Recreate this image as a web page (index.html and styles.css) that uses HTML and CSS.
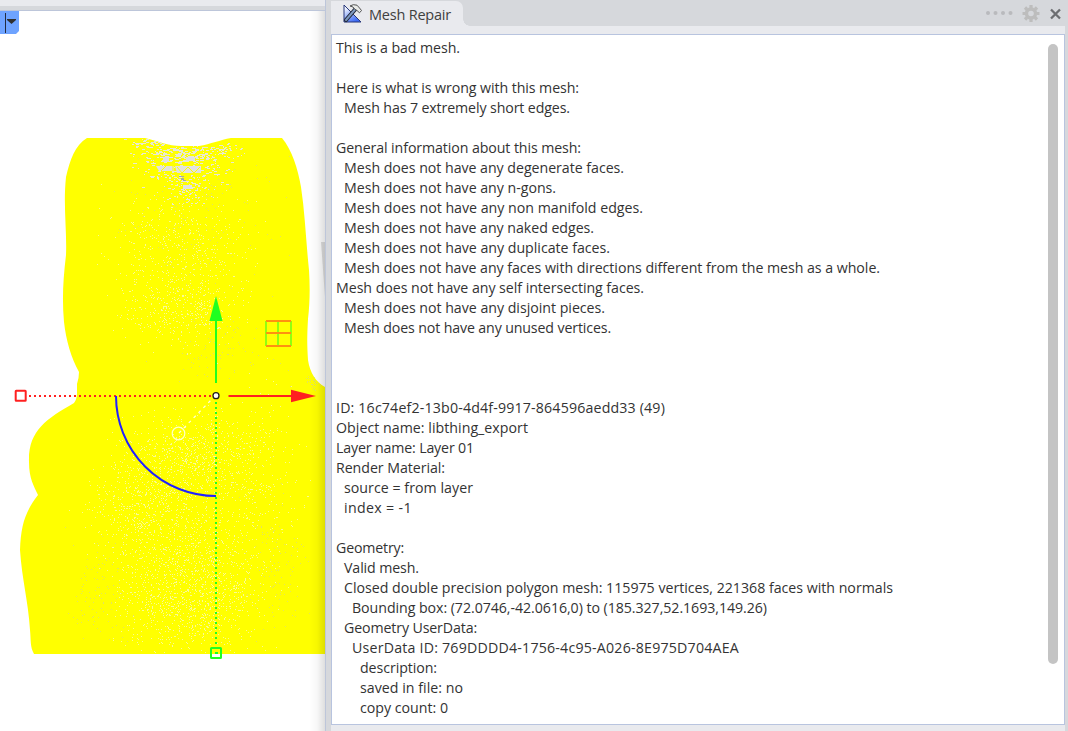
FILE: index.html
```
<!DOCTYPE html>
<html lang="en">
<head>
<meta charset="utf-8">
<title>Mesh Repair</title>
<link rel="stylesheet" href="styles.css">
</head>
<body>
<div class="app">
  <section class="viewport">
    <div class="ribbon"></div>
    <svg class="scene" width="325" height="720" viewBox="0 11 325 720">
      <defs>
        <clipPath id="body"><path id="outline" d="M87 138H145C158 141 168 146 181 146H199C211 144 220 140 231 138H282C292 150 298 169 301 187C305 213 306 242 309 270C310 286 310 302 308 319C307 336 307 345 308 360C310 373 316 382 325 387V654H34C30 647 31 640 30 630C28 600 22 580 20 550C21 525 25 512 38 495C34 486 29 479 29 462C28 431 46 419 74 403Q77 399 77 393V384Q79 378 79 372C71 358 66 340 64 322C62 300 63 280 66 255C67 230 63 205 66 177C70 160 75 145 87 138Z"/></clipPath>
        <linearGradient id="shade"><stop offset="0" stop-opacity="0"/><stop offset=".5" stop-opacity=".03"/><stop offset="1" stop-opacity=".13"/></linearGradient>
      </defs>
      <path d="M321 242h4v55z" fill="#dedede"/>
      <g clip-path="url(#body)">
        <rect y="130" width="325" height="530" fill="#ff0"/>
        <path id="speckles" stroke="#fafa96" shape-rendering="crispEdges"/>
        <path id="wear" stroke="#e9e9d4" shape-rendering="crispEdges"/>
        <path id="dust" stroke="#e2e260" shape-rendering="crispEdges"/>
        <path d="M156 166h18v5h-15zM175 166h26v7h-24zM163 157h6v5h-6zM186 157h9v4h-9zM183 185h9v4h-9z" fill="#e2e2df"/>
        <path d="M156 164.500h45M156 173.500h45M177 167l5 6 6-6 6 6 6-6M173 171v-5M161 171l5-5" stroke="#ff0" fill="none"/>
        <path d="M179 176h5v1h-5zM181 178h3v2h-3zM183 180h3v1h-3z" fill="#a9aaa0"/>
      </g>
      <g fill="none" stroke-width="2">
        <path d="M29 396H212" stroke="#ff2020" stroke-dasharray="2 3"/>
        <path d="M216 402V648" stroke="#20ff20" stroke-dasharray="2 3"/>
        <path d="M216 383V320" stroke="#20ff20"/>
        <path d="M228.500 396H292" stroke="#ff2020"/>
        <path d="M116 396A100 100 0 0 0 216 496" stroke="#2020ff"/>
        <rect x="15.700" y="390.700" width="10" height="10" rx=".5" fill="#fff" stroke="#ff2020"/>
        <rect x="211" y="648" width="10" height="10" rx=".5" stroke="#20ff20"/>
        <path d="M215 653h3" stroke="#20ff20"/>
        <path d="M266 321V346M278 321V346M291 321V346" stroke="#90ff10"/>
        <path d="M266 321H291M266 333H291M266 346H291" stroke="#ff9010"/>
        <circle cx="178.500" cy="433.500" r="6.300" stroke="#ffffc8" stroke-width="1.200"/>
        <path d="M179 433L212 399" stroke="#ffffe0" stroke-dasharray="3 4" stroke-width="1.200"/>
        <circle cx="216" cy="395.700" r="3" fill="#fff" stroke="#202020" stroke-width="1.300"/>
      </g>
      <path d="M216 296l6.500 25h-13z" fill="#20ff20"/>
      <path d="M316 396l-25 6.200v-12.400z" fill="#ff2020"/>
      <rect x="309" y="11" width="16" height="720" fill="url(#shade)"/>
    </svg>
    <svg class="view-menu" width="19" height="23" viewBox="0 0 19 23"><path d="M0 0H19V20L16 23H0Z" fill="#6ea3ff"/><path d="M5.500 2V22" stroke="#222b40"/><path d="M7 8H16V9L11.500 13 7 9Z" fill="#303030"/></svg>
  </section>
  <section class="panel">
    <header class="bar">
      <div class="tab">
        <svg width="20" height="20" viewBox="0 0 20 20">
          <defs><linearGradient id="blue" x1="0" y1="0" x2=".6" y2="1"><stop offset=".2" stop-color="#eef3ff"/><stop offset="1" stop-color="#3c6af5"/></linearGradient></defs>
          <path d="M2 2V19H19Z" fill="url(#blue)" stroke="#27377a"/>
          <path d="M4 17L13.500 6" stroke="#252b3a" stroke-width="4.200" stroke-linecap="round"/>
          <path d="M4 17L13 6.500" stroke="#7d98c0" stroke-width="2" stroke-linecap="round"/>
          <path d="M8 3Q11 .8 15 2.200L17.500 5 19.500 7.500 17.500 9.800 15 7.500 12.500 6 11 4Z" fill="#e8eae8" stroke="#444" stroke-width=".9"/>
        </svg>
        <span class="title" data-width="82">Mesh Repair</span>
      </div>
      <svg class="tools" width="84" height="26" viewBox="984 0 84 26">
        <g fill="#b9babd"><circle cx="988" cy="13" r="2"/><circle cx="995.500" cy="13" r="2"/><circle cx="1003" cy="13" r="2"/><circle cx="1010.500" cy="13" r="2"/></g>
        <circle cx="1031" cy="13.500" r="4.500" fill="none" stroke="#bdbdbd" stroke-width="3.400"/>
        <path d="M1031 5v3M1031 19v3M1022.500 13.500h3M1036.500 13.500h3M1025 7.500l2 2M1035 17.500l2 2M1025 19.500l2-2M1035 9.500l2-2" stroke="#bdbdbd" stroke-width="3.200"/>
        <path d="M1051 9.500L1060 18.500M1060 9.500L1051 18.500" stroke="#6c6e71" stroke-width="2.300"/>
      </svg>
    </header>
    <div class="frame">
      <div class="report">
        <div class="line"><span data-width="124">This is a bad mesh.</span></div>
        <div class="line"></div>
        <div class="line"><span data-width="243">Here is what is wrong with this mesh:</span></div>
        <div class="line in1"><span data-width="226">Mesh has 7 extremely short edges.</span></div>
        <div class="line"></div>
        <div class="line"><span data-width="245">General information about this mesh:</span></div>
        <div class="line in1"><span data-width="280">Mesh does not have any degenerate faces.</span></div>
        <div class="line in1"><span data-width="212">Mesh does not have any n-gons.</span></div>
        <div class="line in1"><span data-width="299">Mesh does not have any non manifold edges.</span></div>
        <div class="line in1"><span data-width="250">Mesh does not have any naked edges.</span></div>
        <div class="line in1"><span data-width="266">Mesh does not have any duplicate faces.</span></div>
        <div class="line in1"><span data-width="536">Mesh does not have any faces with directions different from the mesh as a whole.</span></div>
        <div class="line"><span data-width="308">Mesh does not have any self intersecting faces.</span></div>
        <div class="line in1"><span data-width="261">Mesh does not have any disjoint pieces.</span></div>
        <div class="line in1"><span data-width="267">Mesh does not have any unused vertices.</span></div>
        <div class="line"></div>
        <div class="line"></div>
        <div class="line"></div>
        <div class="line"><span data-width="329">ID: 16c74ef2-13b0-4d4f-9917-864596aedd33 (49)</span></div>
        <div class="line"><span data-width="192">Object name: libthing_export</span></div>
        <div class="line"><span data-width="138">Layer name: Layer 01</span></div>
        <div class="line"><span data-width="109">Render Material:</span></div>
        <div class="line in1"><span data-width="129">source = from layer</span></div>
        <div class="line in1"><span data-width="68">index = -1</span></div>
        <div class="line"></div>
        <div class="line"><span data-width="68">Geometry:</span></div>
        <div class="line in1"><span data-width="75">Valid mesh.</span></div>
        <div class="line in1"><span data-width="549">Closed double precision polygon mesh: 115975 vertices, 221368 faces with normals</span></div>
        <div class="line in2"><span data-width="415">Bounding box: (72.0746,-42.0616,0) to (185.327,52.1693,149.26)</span></div>
        <div class="line in1"><span data-width="133">Geometry UserData:</span></div>
        <div class="line in2"><span data-width="387">UserData ID: 769DDDD4-1756-4c95-A026-8E975D704AEA</span></div>
        <div class="line in3"><span data-width="77">description:</span></div>
        <div class="line in3"><span data-width="103">saved in file: no</span></div>
        <div class="line in3"><span data-width="88">copy count: 0</span></div>
      </div>
      <div class="thumb"></div>
    </div>
  </section>
</div>
<script src="app.js"></script>
</body>
</html>
```
FILE: styles.css
```
* { box-sizing: border-box; }
body { margin: 0; font-family: "Open Sans", "Noto Sans", sans-serif; color: #333; }
.app { display: flex; width: 1068px; height: 731px; overflow: hidden; background: #fff; }
.viewport { position: relative; width: 325px; flex: none; }
.ribbon { height: 11px; background: linear-gradient(#e9eaee 6px, #d6d8dc 6px); border-bottom: 1px solid #bdc6da; }
.scene { display: block; }
.view-menu { position: absolute; left: 0; top: 11px; }
.panel { display: flex; flex-direction: column; flex: 1; background: #d6d8dc; border-left: 1px solid #bdc6da; padding: 0 3px 0 5px; }
.bar { display: flex; justify-content: space-between; height: 26px; flex: none; margin-right: -3px; background: radial-gradient(circle at 139px 19px, #d6d8dc 7px, #e9eaee 7.5px) 132px 19px / 7px 7px no-repeat; background: radial-gradient(circle at 100% 0, #d6d8dc 6.5px, #e9eaee 7px) 132px 19px / 7px 7px no-repeat; }
.tab { display: flex; width: 132px; height: 25px; margin-top: 1px; padding: 2px 0 0 11px; gap: 7px; background: #e9eaee; border-radius: 0 7px 0 0; }
.title { font-size: 14.5px; line-height: 24px; height: 23px; margin-top: 0; white-space: pre; color: #404040; }
.frame { display: flex; flex: 1; min-height: 0; padding: 8px 0 6px; background: #e9eaee; position: relative; }
.report { flex: 1; border: 1px solid #b8c4df; background: #fff; padding: 3px 0 0 4px; }
.line { height: 20px; line-height: 20px; font-size: 14.2px; white-space: pre; }
.in1 { padding-left: 8px; }
.in2 { padding-left: 16px; }
.in3 { padding-left: 24px; }
.thumb { position: absolute; right: 7px; top: 18px; width: 10px; height: 620px; border-radius: 5px; background: #c4c4c4; }
```
FILE: app.js
```
document.querySelectorAll("[data-width]").forEach(el => {
  const gap = (Number(el.dataset.width) - el.getBoundingClientRect().width) / el.textContent.length;
  el.style.letterSpacing = gap + "px";
});

let seed = 7;
const rnd = () => (seed = (seed * 16807) % 2147483647) / 2147483647;
const bell = () => (rnd() + rnd() + rnd() - 1.5) / 1.5;
function scatter(id, clouds) {
  let d = "";
  clouds.forEach(([cx, cy, rx, ry, n, len]) => {
    for (let i = 0; i < n; i++) {
      const x = Math.round(cx + bell() * rx), y = Math.round(cy + bell() * ry) + 0.5;
      d += `M${x} ${y}h${1 + Math.floor(rnd() * len)}`;
    }
  });
  document.getElementById(id).setAttribute("d", d);
}
scatter("speckles", [[180,245,95,70,480,1],[180,310,85,55,420,1],[190,455,100,60,650,1],[150,510,90,70,600,1],[190,590,100,100,1300,1],[250,500,75,150,350,1]]);
scatter("wear", [[181,153,60,14,190,4],[185,170,58,26,200,3],[187,190,40,24,100,2],[150,143,35,6,40,3],[222,150,30,12,50,2]]);
scatter("dust", [[200,220,110,100,130,1],[100,590,45,70,100,1],[275,570,45,100,100,1],[313,380,10,22,40,1],[220,350,90,50,80,1]]);
```
